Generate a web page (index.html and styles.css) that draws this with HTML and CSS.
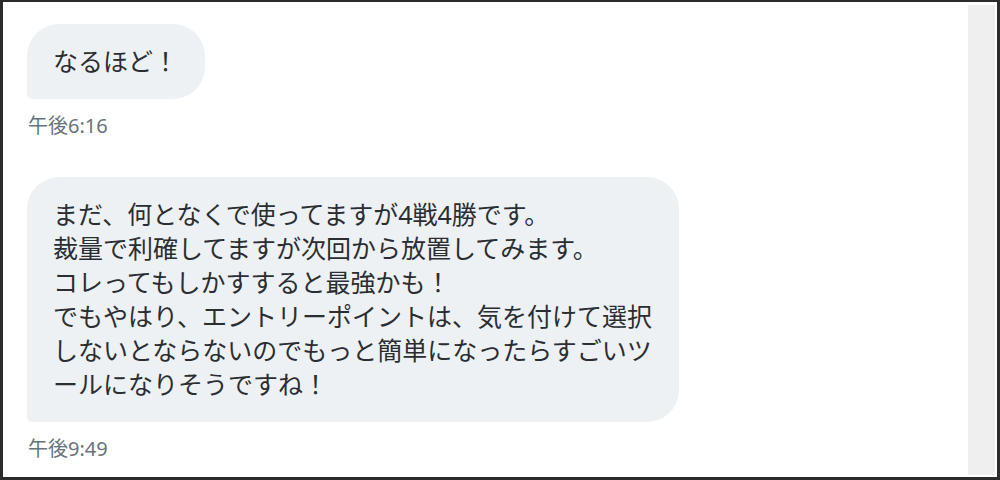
FILE: index.html
```html
<!DOCTYPE html>
<html lang="ja">
<head>
  <meta charset="UTF-8" />
  <title>メッセージ</title>
  <link rel="stylesheet" href="styles.css">
</head>
<body>
  <div class="frame">
    <div class="thread">
      <div class="message">
        <div class="bubble">なるほど！</div>
        <div class="time">午後6:16</div>
      </div>
      <div class="message">
        <div class="bubble">まだ、何となくで使ってますが4戦4勝です。<br>裁量で利確してますが次回から放置してみます。<br>コレってもしかすすると最強かも！<br>でもやはり、エントリーポイントは、気を付けて選択<br>しないとならないのでもっと簡単になったらすごいツ<br>ールになりそうですね！</div>
        <div class="time">午後9:49</div>
      </div>
    </div>
    <div class="scrollbar"></div>
  </div>
</body>
</html>
```

FILE: styles.css
```css
html, body {
  margin: 0;
  background: #fff;
}
.frame {
  box-sizing: border-box;
  width: 1000px;
  height: 480px;
  border: 3px solid #2b2b2b;
  border-top-width: 2px;
  display: flex;
  overflow: hidden;
}
.thread {
  flex: 1;
  padding: 22px 0 0 24px;
}
.message {
  margin-bottom: 39px;
}
.bubble {
  display: inline-block;
  background: #eef1f3;
  color: #2a2e33;
  font-family: "Noto Sans", "Noto Sans CJK JP", sans-serif;
  font-size: 25px;
  line-height: 34px;
  padding: 20px 27px 21px 26px;
  border-radius: 32px 32px 32px 5px;
}
.time {
  margin-top: 15px;
  color: #68737d;
  font-family: "Noto Sans", "Noto Sans CJK JP", sans-serif;
  font-size: 20px;
  line-height: 24px;
  padding-left: 1px;
}
.scrollbar {
  width: 27px;
  margin: 3px 2px 2px 0;
  background: #efefef;
}
```
